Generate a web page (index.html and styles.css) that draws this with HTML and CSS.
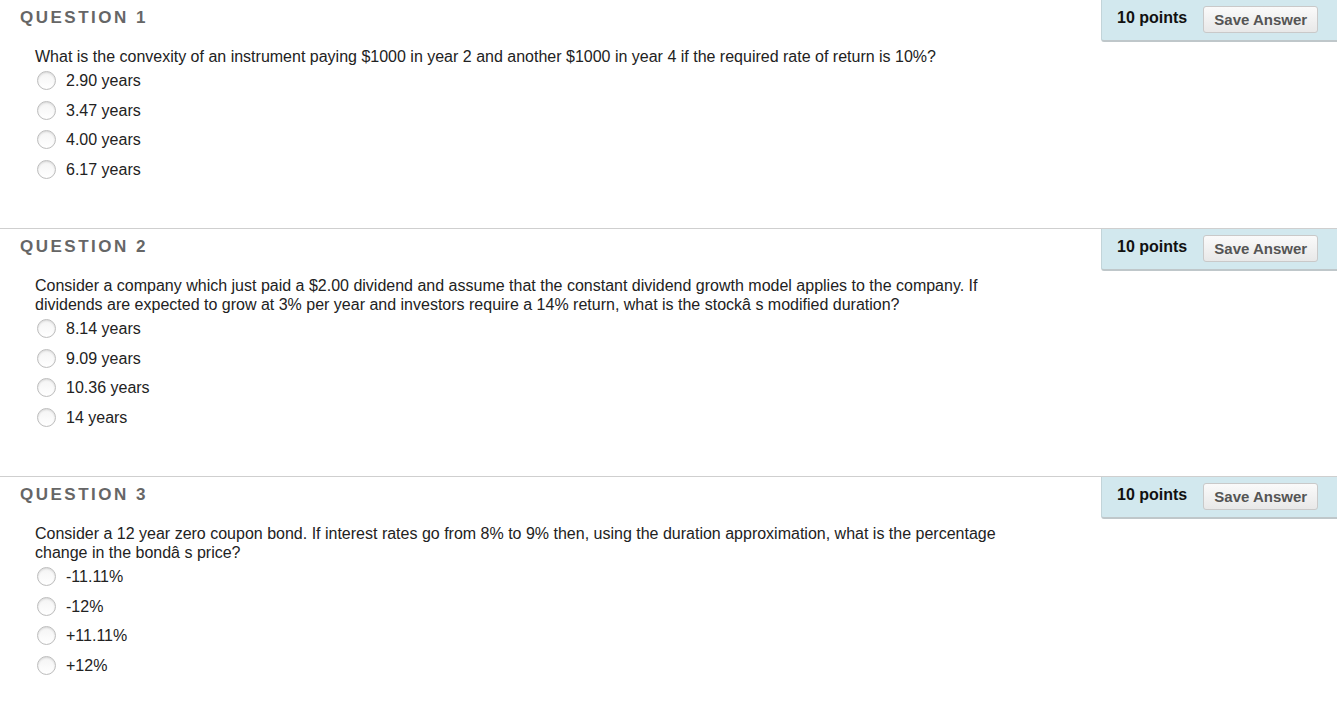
FILE: index.html
```html
<!DOCTYPE html>
<html>
<head>
<meta charset="utf-8">
<link rel="stylesheet" href="styles.css">
</head>
<body>
<div class="page">
  <section class="question">
    <div class="q-head">
      <h2 class="q-title">QUESTION 1</h2>
      <div class="points">
        <span class="points-label">10 points</span>
        <button class="save-btn">Save Answer</button>
      </div>
    </div>
    <div class="q-body">
      <p class="q-text">What is the convexity of an instrument paying $1000 in year 2 and another $1000 in year 4 if the required rate of return is 10%?</p>
      <ul class="options">
        <li class="option"><span class="radio"></span><span class="opt-label">2.90 years</span></li>
        <li class="option"><span class="radio"></span><span class="opt-label">3.47 years</span></li>
        <li class="option"><span class="radio"></span><span class="opt-label">4.00 years</span></li>
        <li class="option"><span class="radio"></span><span class="opt-label">6.17 years</span></li>
      </ul>
    </div>
  </section>
  <section class="question">
    <div class="q-head">
      <h2 class="q-title">QUESTION 2</h2>
      <div class="points">
        <span class="points-label">10 points</span>
        <button class="save-btn">Save Answer</button>
      </div>
    </div>
    <div class="q-body">
      <p class="q-text">Consider a company which just paid a $2.00 dividend and assume that the constant dividend growth model applies to the company. If dividends are expected to grow at 3% per year and investors require a 14% return, what is the stockâ s modified duration?</p>
      <ul class="options">
        <li class="option"><span class="radio"></span><span class="opt-label">8.14 years</span></li>
        <li class="option"><span class="radio"></span><span class="opt-label">9.09 years</span></li>
        <li class="option"><span class="radio"></span><span class="opt-label">10.36 years</span></li>
        <li class="option"><span class="radio"></span><span class="opt-label">14 years</span></li>
      </ul>
    </div>
  </section>
  <section class="question">
    <div class="q-head">
      <h2 class="q-title">QUESTION 3</h2>
      <div class="points">
        <span class="points-label">10 points</span>
        <button class="save-btn">Save Answer</button>
      </div>
    </div>
    <div class="q-body">
      <p class="q-text">Consider a 12 year zero coupon bond. If interest rates go from 8% to 9% then, using the duration approximation, what is the percentage change in the bondâ s price?</p>
      <ul class="options">
        <li class="option"><span class="radio"></span><span class="opt-label">-11.11%</span></li>
        <li class="option"><span class="radio"></span><span class="opt-label">-12%</span></li>
        <li class="option"><span class="radio"></span><span class="opt-label">+11.11%</span></li>
        <li class="option"><span class="radio"></span><span class="opt-label">+12%</span></li>
      </ul>
    </div>
  </section>
</div>
</body>
</html>
```
FILE: styles.css
```css
html, body {
  margin: 0;
  padding: 0;
  background: #fff;
}
body {
  font-family: "Liberation Sans", Arial, Helvetica, sans-serif;
  color: #222;
}
.page {
  display: flex;
  flex-direction: column;
}
.question {
  border-top: 1px solid #cfcfcf;
  padding-bottom: 44px;
}
.question:first-child {
  border-top: none;
}
.q-head {
  display: flex;
  justify-content: space-between;
  align-items: flex-start;
  height: 42px;
}
.q-title {
  margin: 0;
  padding: 8px 0 0 20px;
  font-size: 17px;
  line-height: 20px;
  font-weight: bold;
  letter-spacing: 2.5px;
  color: #666;
}
.points {
  box-sizing: border-box;
  width: 236px;
  height: 42px;
  background: #d2e8ee;
  border-left: 1px solid #c2d4d9;
  border-bottom: 2px solid #bfc7ca;
  border-bottom-left-radius: 3px;
  display: flex;
  align-items: flex-start;
  padding: 6px 0 0 15px;
  gap: 16px;
}
.points-label {
  font-size: 16px;
  font-weight: bold;
  line-height: 24px;
  color: #111;
}
.save-btn {
  box-sizing: border-box;
  width: 115px;
  height: 27px;
  padding: 0;
  margin: 0;
  font-family: "Liberation Sans", Arial, Helvetica, sans-serif;
  font-size: 15px;
  font-weight: bold;
  color: #555;
  background: linear-gradient(#fafafa, #e8e8e8);
  border: 1px solid #c9c9c9;
  border-radius: 3px;
  line-height: 25px;
}
.q-body {
  padding: 5px 292px 0 35px;
}
.q-text {
  margin: 0;
  font-size: 16px;
  line-height: 19px;
  color: #222;
}
.options {
  list-style: none;
  margin: 0;
  padding: 0;
}
.option {
  display: flex;
  align-items: center;
  height: 29.5px;
  padding-left: 2px;
}
.radio {
  box-sizing: border-box;
  width: 19px;
  height: 19px;
  border-radius: 50%;
  border: 1px solid #bdbdbd;
  background: linear-gradient(#f4f4f4, #fff);
  box-shadow: inset 0 1px 2px rgba(0,0,0,0.12);
  margin-right: 10px;
  flex: none;
}
.opt-label {
  font-size: 16px;
  line-height: 19px;
  color: #222;
}
```
